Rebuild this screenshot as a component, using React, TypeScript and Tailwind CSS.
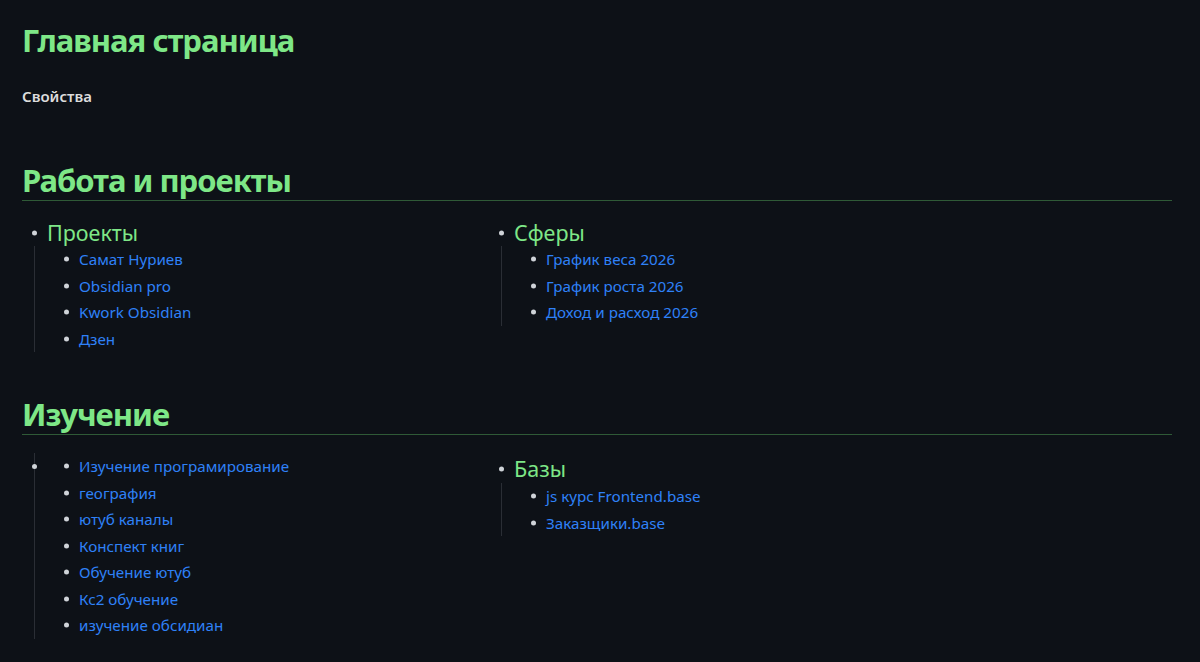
import React from "react";

const FONT = { fontFamily: '"Noto Sans", "Open Sans", sans-serif' };

function Bullet() {
  return <span className="absolute left-[9.5px] top-1/2 -translate-y-1/2 w-[5px] h-[5px] rounded-full bg-[#cfd3d8]" />;
}

function SubList({ items }: { items: string[] }) {
  return (
    <div className="ml-[12px] border-l border-[#2a2e35] pl-[19px]">
      {items.map((t) => (
        <div key={t} className="relative pl-[25px] h-[26.5px] flex items-center">
          <Bullet />
          <span className="text-[15.2px] text-[#2f81f7] leading-[26.5px] whitespace-nowrap">{t}</span>
        </div>
      ))}
    </div>
  );
}

function Group({ title, items }: { title: string; items: string[] }) {
  return (
    <div>
      <div className="relative pl-[25px] h-[26px] flex items-center">
        <Bullet />
        <span className="text-[21.5px] text-[#7ee787] leading-[26px]">{title}</span>
      </div>
      <SubList items={items} />
    </div>
  );
}

function EmptyGroup({ items }: { items: string[] }) {
  return (
    <div className="relative">
      <span className="absolute left-[9.5px] top-[10.5px] w-[5px] h-[5px] rounded-full bg-[#cfd3d8]" />
      <SubList items={items} />
    </div>
  );
}

export default function App() {
  return (
    <div style={FONT} className="min-h-[662px] bg-[#0d1117] pl-[22px] pr-[28px] pt-[18px] text-[#dadada]">
      <h1 className="text-[31px] tracking-[-1px] font-bold leading-[44px] text-[#7ee787]">Главная страница</h1>
      <div className="mt-[22px] text-[15px] font-semibold leading-[24px] text-[#dcdcdc]">Свойства</div>

      <h2 className="mt-[52px] text-[31px] tracking-[-1px] font-bold leading-[40px] text-[#7ee787] border-b border-[#2f5a37]">
        Работа и проекты
      </h2>
      <div className="mt-[19px] grid grid-cols-[467px_1fr]">
        <Group title="Проекты" items={["Самат Нуриев", "Obsidian pro", "Kwork Obsidian", "Дзен"]} />
        <Group title="Сферы" items={["График веса 2026", "График роста 2026", "Доход и расход 2026"]} />
      </div>

      <h2 className="mt-[42px] text-[31px] tracking-[-1px] font-bold leading-[40px] text-[#7ee787] border-b border-[#2f5a37]">
        Изучение
      </h2>
      <div className="mt-[18px] grid grid-cols-[467px_1fr]">
        <EmptyGroup
          items={[
            "Изучение програмирование",
            "география",
            "ютуб каналы",
            "Конспект книг",
            "Обучение ютуб",
            "Кс2 обучение",
            "изучение обсидиан",
          ]}
        />
        <div className="pt-[2px]">
          <div>
            <div className="relative pl-[25px] h-[28px] flex items-center">
              <Bullet />
              <span className="text-[21.5px] text-[#7ee787] leading-[26px]">Базы</span>
            </div>
            <SubList items={["js курс Frontend.base", "Заказщики.base"]} />
          </div>
        </div>
      </div>
    </div>
  );
}
